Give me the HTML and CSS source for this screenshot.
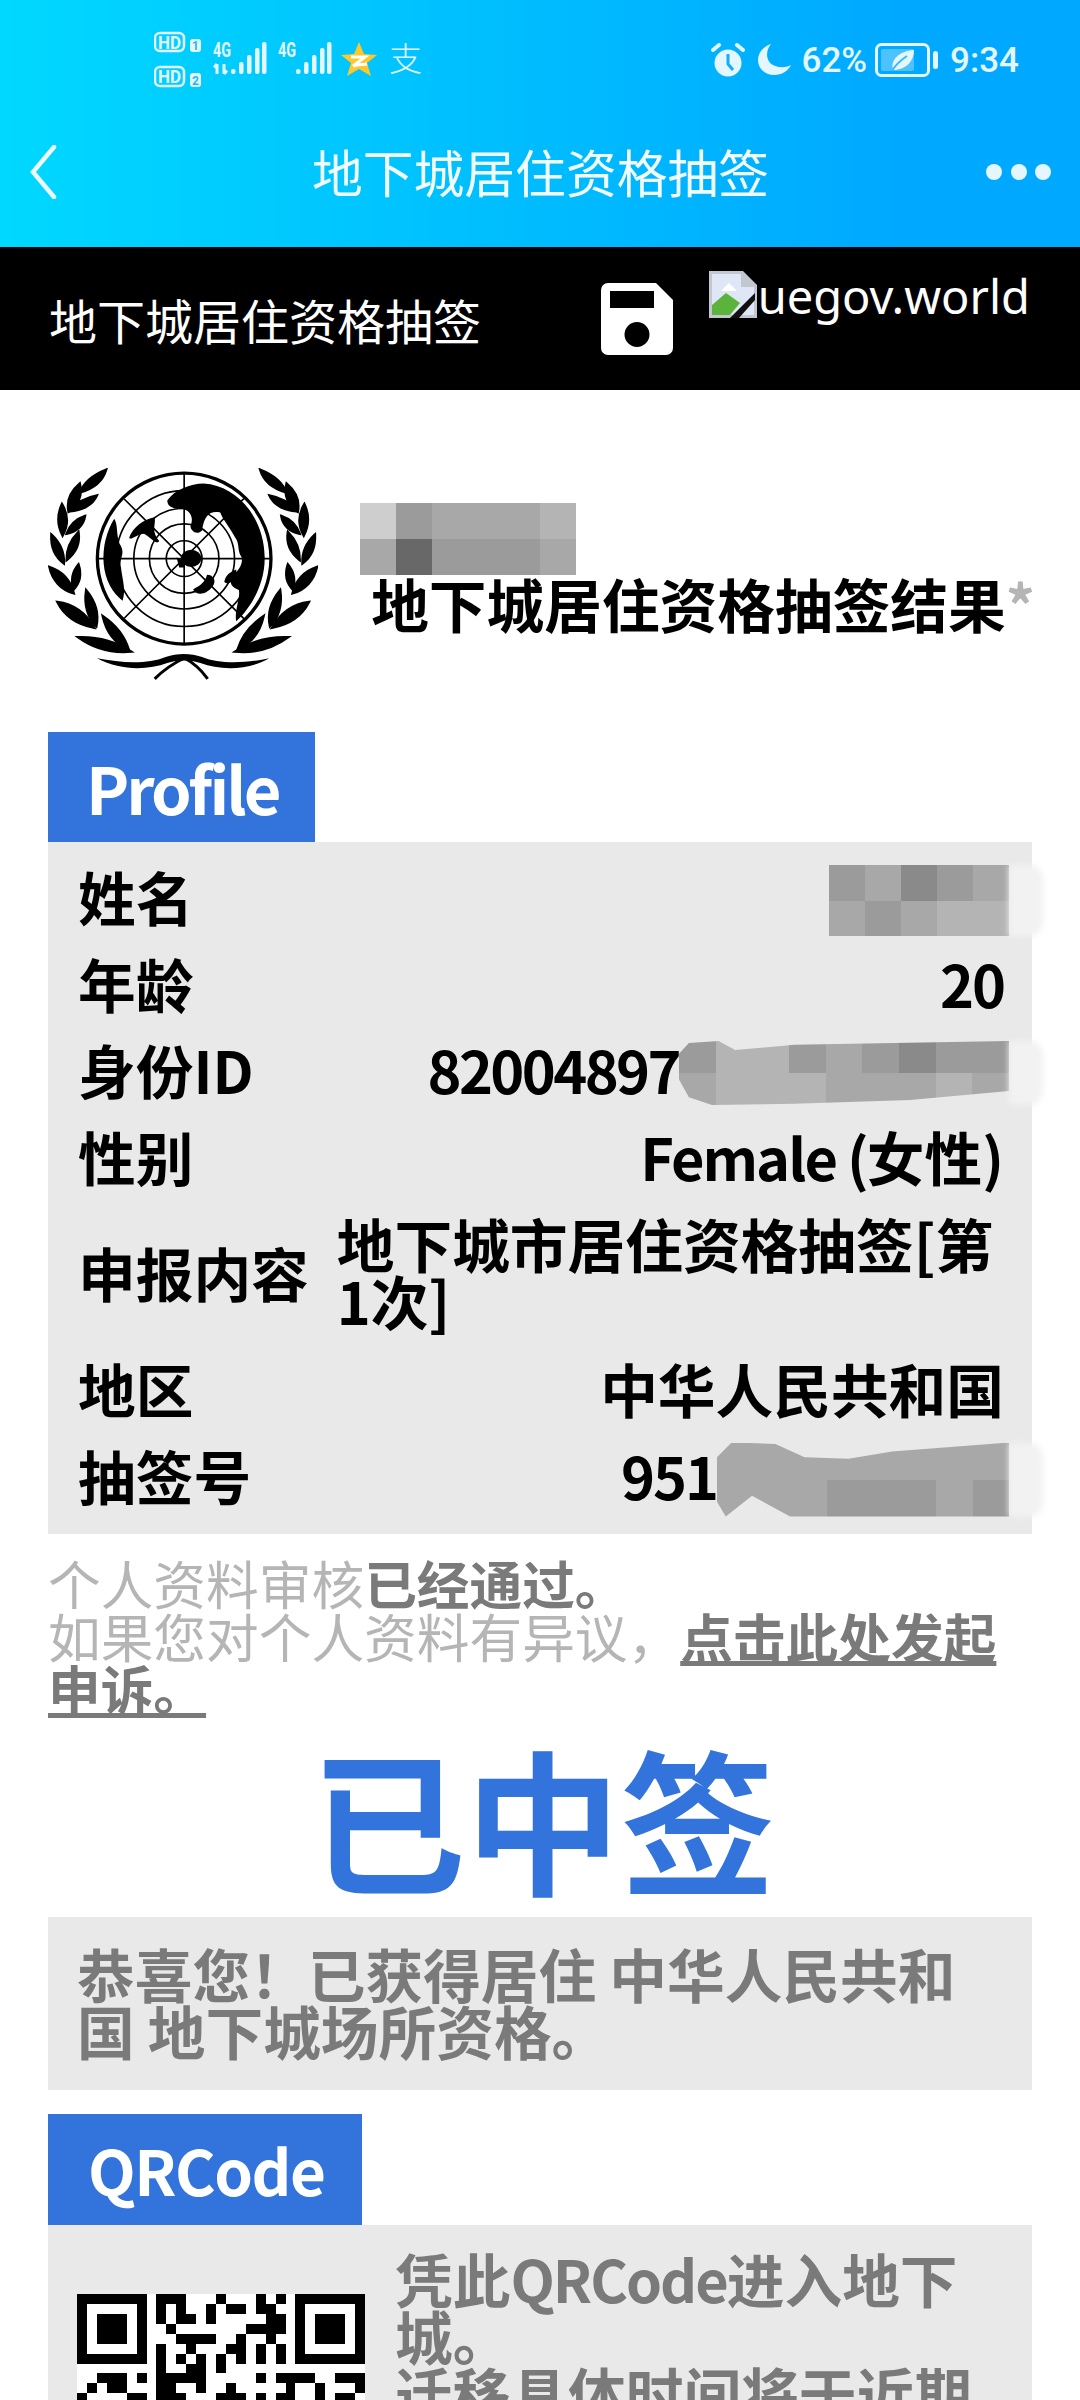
FILE: index.html
```html
<!DOCTYPE html>
<html lang="zh-CN">
<head>
    <meta charset="UTF-8">
    <meta name="viewport" content="width=device-width, initial-scale=1.0">
    <title>地下城居住资格抽签</title>
    <link rel="stylesheet" href="styles.css">
</head>
<body>
    <div class="page">
        <header class="app-header">
            <div class="statusbar">
                <svg class="status-left" viewBox="0 0 270 60" width="270" height="60">
                    <g class="hd-badge">
                        <rect x="1" y="3" width="29" height="18" rx="5"/>
                        <text x="15.500" y="18.500" text-anchor="middle" textLength="23" lengthAdjust="spacingAndGlyphs">HD</text>
                        <rect class="sim" x="36" y="9" width="11" height="13" rx="3"/>
                        <text class="sim-num" x="41.500" y="20" text-anchor="middle">1</text>
                        <rect x="1" y="37" width="29" height="19" rx="5"/>
                        <text x="15.500" y="53" text-anchor="middle" textLength="23" lengthAdjust="spacingAndGlyphs">HD</text>
                        <rect class="sim" x="36" y="43" width="11" height="14" rx="3"/>
                        <text class="sim-num" x="41.500" y="54.500" text-anchor="middle">2</text>
                    </g>
                    <g class="signal">
                        <text x="59" y="27" textLength="18" lengthAdjust="spacingAndGlyphs">4G</text>
                        <path class="arrows" d="M63 44v-10m-3 3.500l3-3.500M70 34v10m3-3.500l-3 3.500"/>
                        <rect x="77" y="39" width="4.500" height="5" rx="2"/>
                        <rect x="85" y="32" width="4.500" height="12" rx="2"/>
                        <rect x="93" y="25" width="4.500" height="19" rx="2"/>
                        <rect x="101" y="18" width="4.500" height="26" rx="2"/>
                        <rect x="108" y="12" width="4.500" height="32" rx="2"/>
                        <text x="124" y="27" textLength="18" lengthAdjust="spacingAndGlyphs">4G</text>
                        <rect x="142" y="39" width="4.500" height="5" rx="2"/>
                        <rect x="150" y="32" width="4.500" height="12" rx="2"/>
                        <rect x="158" y="25" width="4.500" height="19" rx="2"/>
                        <rect x="166" y="18" width="4.500" height="26" rx="2"/>
                        <rect x="173" y="12" width="4.500" height="32" rx="2"/>
                    </g>
                    <polygon class="star" points="205,12 210,24 223,25 213,33 217,46 205,39 193,46 197,33 187,25 200,24"/>
                    <path class="star-z" d="M197 27h14l-12 9c5-2 10-1 14-2"/>
                    <text class="zhi" x="235" y="41">支</text>
                </svg>
                <div class="status-right">
                    <svg viewBox="0 0 34 34" width="34" height="34">
                        <circle class="ico-fill" cx="17" cy="20" r="13.500"/>
                        <path class="ico-hand" d="M17 11v10l5 6"/>
                        <path class="ico-bell" d="M2 7l6-5M32 7l-6-5"/>
                    </svg>
                    <svg class="ico-moon" viewBox="0 0 33 32" width="33" height="32">
                        <path class="ico-fill" d="M13 0C4 3 0 10 0 16c0 9 8 15 16 15 8 0 14-4 17-10-6 3-12 3-18 0C8 18 7 7 13 0z"/>
                    </svg>
                    <span class="status-pct">62%</span>
                    <svg class="battery" viewBox="0 0 64 34" width="64" height="34">
                        <rect class="batt-shell" x="1.500" y="1.500" width="52" height="31" rx="5"/>
                        <rect class="batt-level" x="6" y="6" width="33" height="22" rx="2"/>
                        <path class="ico-fill" d="M18 27c-3-10 6-19 21-20 0 11-8 20-21 20z"/>
                        <path class="batt-vein" d="M17 28c4-7 9-11 15-15"/>
                        <rect class="ico-fill" x="58" y="8" width="5" height="18" rx="2.500"/>
                    </svg>
                    <span class="status-time">9:34</span>
                </div>
            </div>
            <nav class="navbar">
                <svg class="nav-back" viewBox="0 0 28 54" width="28" height="54">
                    <path d="M25 2L4 27l21 25"/>
                </svg>
                <span class="nav-title">地下城居住资格抽签</span>
                <svg class="nav-more" viewBox="0 0 66 18" width="66" height="18">
                    <circle cx="8" cy="9" r="8"/>
                    <circle cx="33" cy="9" r="8"/>
                    <circle cx="57" cy="9" r="8"/>
                </svg>
            </nav>
        </header>

        <div class="topbar">
            <span class="topbar-title">地下城居住资格抽签</span>
            <svg class="save-icon" viewBox="0 0 72 72" width="72" height="72">
                <path fill-rule="evenodd" d="M7 0h48l17 17v48a7 7 0 0 1-7 7H7a7 7 0 0 1-7-7V7a7 7 0 0 1 7-7zM9 8v17h44V8zM36 39a12.500 12.500 0 1 0 0 25 12.500 12.500 0 0 0 0-25z"/>
            </svg>
            <div class="site-logo">
                <svg class="broken-img" viewBox="0 0 48 47" width="48" height="47">
                    <path fill="#c3c7cf" d="M0 0h34l14 14v33H0z"/>
                    <path fill="#dfe6f5" d="M3 3h29v13h13v28H3z"/>
                    <path fill="#fff" d="M12 20l8-8 8 8z"/>
                    <path fill="#5cb33c" d="M3 44V34l14-12 14 10-10 12z"/>
                    <path fill="#111" d="M21 47L46 22v7L30 47z"/>
                </svg>
                <span class="site-name">uegov.world</span>
            </div>
        </div>

        <main class="content">
            <section class="brand">
                <svg class="un-logo" viewBox="50 52 815 642" width="270" height="213">
                    <defs>
                        <g id="wreath">
                            <path d="M146 126C160 90 190 70 226 56 215 95 185 115 146 126z"/>
                            <path d="M112 184C105 150 120 120 146 98 155 135 140 165 112 184z"/>
                            <path d="M116 182C135 155 165 140 198 134 185 165 150 180 116 182z"/>
                            <path d="M94 256C78 225 78 190 92 160 110 190 112 225 94 256z"/>
                            <path d="M106 250C115 225 135 205 162 196 158 225 135 245 106 250z"/>
                            <path d="M98 340C70 320 58 290 60 252 85 275 100 305 98 340z"/>
                            <path d="M106 330C105 295 118 268 142 244 148 280 132 310 106 330z"/>
                            <path d="M128 430C90 420 62 390 54 350 90 362 118 390 128 430z"/>
                            <path d="M126 420C118 395 122 365 142 342 152 372 146 400 126 420z"/>
                            <path d="M190 534C140 525 100 500 78 456 125 462 165 490 190 534z"/>
                            <path d="M196 530C170 505 158 465 165 420 190 450 205 490 196 530z"/>
                            <path d="M302 606C240 612 185 595 140 562 195 560 255 575 302 606z"/>
                            <path d="M294 600C250 580 225 545 215 498 255 525 282 560 294 600z"/>
                        </g>
                    </defs>
                    <use class="un-wreath" href="#wreath"/>
                    <use class="un-wreath" href="#wreath" transform="translate(916 0) scale(-1 1)"/>
                    <path d="M198 626C270 640 350 645 405 622 440 610 480 610 515 622 570 645 650 640 718 626 650 664 570 662 510 640 480 630 440 630 410 640 350 662 270 664 198 626z"/>
                    <path class="un-line-thick" d="M372 688C400 660 430 640 462 625 490 640 512 660 532 688"/>
                    <g class="un-grid">
                        <ellipse class="un-rim" cx="461" cy="325" rx="262" ry="258"/>
                        <circle cx="461" cy="325" r="54"/>
                        <circle cx="461" cy="325" r="105"/>
                        <circle cx="461" cy="325" r="152"/>
                        <circle cx="461" cy="325" r="205"/>
                        <path d="M461 66v518M200 325h522M280 145l362 362M280 505l362-362"/>
                    </g>
                    <path d="M410 150C430 118 480 98 520 98 620 104 702 200 704 320 706 400 662 475 618 514 612 482 632 440 626 420 606 412 590 400 614 370 625 360 640 340 634 320 620 300 630 280 614 260 600 232 580 212 570 186 540 180 522 192 515 240 500 256 480 242 480 226 490 206 482 182 460 176 430 176 410 170 410 150z"/>
                    <path d="M250 205C228 240 214 290 218 340 222 390 245 430 275 452 286 420 275 390 270 350 265 320 286 310 266 280 255 250 262 225 250 205z"/>
                    <path d="M295 262C305 230 340 206 372 200 376 226 360 240 386 272 376 286 360 260 340 250 320 250 300 272 295 262z"/>
                    <ellipse cx="482" cy="324" rx="31" ry="26"/>
                    <path d="M438 322L458 330 462 352 446 352z"/>
                    <path d="M488 418C510 406 525 396 530 374 550 374 560 394 546 410 530 432 500 440 488 418z"/>
                    <path d="M582 396C585 375 600 365 618 358 622 380 600 410 582 396z"/>
                </svg>
                <div class="brand-text">
                    <div class="mosaic mosaic-brand">
                        <div class="mosaic-cells cols-6">
                            <span class="t5"></span><span class="t3"></span><span class="t2"></span><span class="t2"></span><span class="t2"></span><span class="t1"></span>
                            <span class="t2"></span><span class="t6"></span><span class="t3"></span><span class="t3"></span><span class="t3"></span><span class="t2"></span>
                        </div>
                    </div>
                    <h1 class="brand-title">地下城居住资格抽签结果<span class="brand-star">*</span></h1>
                </div>
            </section>

            <div class="tab tab-profile">Profile</div>
            <section class="profile">
                <div class="row">
                    <span class="row-label">姓名</span>
                    <div class="row-value">
                        <div class="mosaic mosaic-name">
                            <div class="mosaic-cells cols-5">
                                <span class="t3"></span><span class="t2"></span><span class="t4"></span><span class="t3"></span><span class="t2"></span>
                                <span class="t2"></span><span class="t3"></span><span class="t2"></span><span class="t1"></span><span class="t1"></span>
                            </div>
                        </div>
                    </div>
                </div>
                <div class="row">
                    <span class="row-label">年龄</span>
                    <div class="row-value"><span class="latin">20</span></div>
                </div>
                <div class="row">
                    <span class="row-label">身份ID</span>
                    <div class="row-value">
                        <span class="latin id-num">82004897</span>
                        <div class="mosaic mosaic-id">
                            <div class="mosaic-cells cols-9">
                                <span class="t3"></span><span class="t1"></span><span class="t1"></span><span class="t3"></span><span class="t2"></span><span class="t3"></span><span class="t4"></span><span class="t3"></span><span class="t3"></span>
                                <span class="t2"></span><span class="t1"></span><span class="t1"></span><span class="t1"></span><span class="t2"></span><span class="t2"></span><span class="t2"></span><span class="t1"></span><span class="t2"></span>
                            </div>
                        </div>
                    </div>
                </div>
                <div class="row">
                    <span class="row-label">性别</span>
                    <div class="row-value"><span><span class="latin">Female (</span>女性)</span></div>
                </div>
                <div class="row row-wrap">
                    <span class="row-label">申报内容</span>
                    <div class="row-text">地下城市居住资格抽签[第1次]</div>
                </div>
                <div class="row">
                    <span class="row-label">地区</span>
                    <div class="row-value">中华人民共和国</div>
                </div>
                <div class="row">
                    <span class="row-label">抽签号</span>
                    <div class="row-value">
                        <span class="latin">951</span>
                        <div class="mosaic mosaic-serial">
                            <div class="mosaic-cells cols-8">
                                <span class="t2"></span><span class="t2"></span><span class="t2"></span><span class="t2"></span><span class="t2"></span><span class="t2"></span><span class="t2"></span><span class="t2"></span>
                                <span class="t2"></span><span class="t2"></span><span class="t2"></span><span class="t3"></span><span class="t3"></span><span class="t3"></span><span class="t2"></span><span class="t3"></span>
                            </div>
                        </div>
                    </div>
                </div>
            </section>

            <p class="notice">个人资料审核<strong>已经通过。</strong><br>如果您对个人资料有异议，<a class="notice-link" href="#">点击此处发起申诉。</a></p>

            <div class="result">已中签</div>

            <p class="congrats">恭喜您！已获得居住 中华人民共和国 地下城场所资格。</p>

            <div class="tab tab-qr">QRCode</div>
            <section class="qr-box">
                <svg class="qr" viewBox="0 0 29 29" width="288" height="288" shape-rendering="crispEdges">
                    <rect width="29" height="29" fill="#fff"/>
                    <path fill-rule="evenodd" d="M0 0h7v7h-7zM1 1h5v5h-5zM2 2h3v3h-3zM22 0h7v7h-7zM23 1h5v5h-5zM24 2h3v3h-3z"/>
                    <path d="M8 0h3v1h-3zM14 0h1v1h-1zM18 0h1v1h-1zM20 0h1v1h-1z
                             M8 1h1v1h-1zM10 1h1v1h-1zM13 1h1v1h-1zM15 1h2v1h-2zM18 1h2v1h-2z
                             M8 2h1v1h-1zM10 2h2v1h-2zM13 2h1v1h-1zM19 2h2v1h-2z
                             M9 3h1v1h-1zM17 3h4v1h-4z
                             M10 4h4v1h-4zM16 4h1v1h-1zM19 4h1v1h-1z
                             M8 5h1v1h-1zM11 5h1v1h-1zM15 5h2v1h-2zM18 5h1v1h-1zM20 5h1v1h-1z
                             M8 6h1v1h-1zM10 6h1v1h-1zM12 6h1v1h-1zM14 6h1v1h-1zM16 6h1v1h-1zM18 6h1v1h-1zM20 6h1v1h-1z
                             M8 7h1v1h-1zM11 7h2v1h-2zM14 7h1v1h-1z
                             M2 8h3v1h-3zM6 8h1v1h-1zM8 8h5v1h-5zM18 8h1v1h-1zM20 8h4v1h-4zM26 8h3v1h-3z
                             M1 9h1v1h-1zM3 9h2v1h-2zM8 9h2v1h-2zM12 9h1v1h-1zM15 9h1v1h-1zM21 9h1v1h-1zM24 9h1v1h-1zM28 9h1v1h-1z
                             M0 10h1v1h-1zM5 10h2v1h-2zM8 10h3v1h-3zM14 10h3v1h-3zM18 10h1v1h-1zM20 10h2v1h-2zM24 10h1v1h-1zM26 10h2v1h-2z"/>
                </svg>
                <p class="qr-text">凭此<span class="latin">QRCode</span>进入地下城。<br>迁移具体时间将于近期</p>
            </section>
        </main>
    </div>
</body>
</html>
```

FILE: styles.css
```css
* {
    box-sizing: border-box;
}

body {
    margin: 0;
    background: #fff;
    font-family: "Noto Sans CJK SC", "Noto Sans", sans-serif;
}

.page {
    width: 1080px;
    height: 2400px;
    overflow: hidden;
    background: #fff;
}

/* app chrome */
.app-header {
    height: 247px;
    background: linear-gradient(90deg, #00d8ff 0%, #00a8ff 85%);
    color: #fff;
}

.statusbar {
    height: 116px;
    padding: 30px 61px 0 154px;
    display: flex;
    justify-content: space-between;
}

.status-left text {
    font-family: "Roboto", sans-serif;
    font-weight: 700;
}

.hd-badge rect {
    fill: none;
    stroke: #e4f7ff;
    stroke-width: 2.5;
}

.hd-badge text {
    fill: #e4f7ff;
    font-size: 19px;
}

.hd-badge .sim {
    fill: #e4f7ff;
    stroke: none;
}

.hd-badge .sim-num {
    fill: #1cb8ff;
    font-size: 12px;
}

.signal rect {
    fill: #e4f7ff;
}

.signal text {
    fill: #e4f7ff;
    font-size: 20px;
}

.arrows {
    fill: none;
    stroke: #e4f7ff;
    stroke-width: 3;
}

.star {
    fill: #ffc72a;
}

.star-z {
    fill: none;
    stroke: #fff;
    stroke-width: 3;
}

.status-left .zhi {
    fill: #e4f7ff;
    font-family: "Noto Sans CJK SC", sans-serif;
    font-size: 33px;
    font-weight: 300;
}

.status-right {
    height: 60px;
    display: flex;
    align-items: center;
    color: #e4f7ff;
    font-family: "Roboto", sans-serif;
    font-size: 35px;
    font-weight: 500;
}

.status-right svg {
    margin-right: 13px;
}

.status-right .ico-moon {
    margin-right: 11px;
}

.status-pct {
    margin-right: 8px;
}

.status-right .battery {
    margin-right: 11px;
}

.ico-fill {
    fill: #e4f7ff;
}

.ico-hand {
    fill: none;
    stroke: #10aeff;
    stroke-width: 3;
}

.ico-bell {
    fill: none;
    stroke: #e4f7ff;
    stroke-width: 4;
    stroke-linecap: round;
}

.batt-shell {
    fill: none;
    stroke: #e4f7ff;
    stroke-width: 3;
}

.batt-level {
    fill: #4cc2ff;
}

.batt-vein {
    fill: none;
    stroke: #3cb8ff;
    stroke-width: 2;
}

.navbar {
    height: 131px;
    padding: 0 28px 20px 29px;
    display: grid;
    grid-template-columns: 1fr auto 1fr;
    align-items: center;
}

.nav-back path {
    fill: none;
    stroke: #ecfaff;
    stroke-width: 4.500;
    stroke-linecap: round;
}

.nav-title {
    font-size: 50.800px;
    line-height: 1;
    color: #f2fbff;
}

.nav-more {
    justify-self: end;
}

.nav-more circle {
    fill: #e4f7ff;
}

.topbar {
    height: 143px;
    padding: 0 50px 0 49px;
    display: flex;
    align-items: center;
    background: #000;
    color: #fff;
}

.topbar-title {
    font-size: 48px;
    line-height: 1;
    margin-right: auto;
}

.save-icon {
    fill: #fff;
    margin-right: 36px;
}

.site-logo {
    align-self: flex-start;
    margin-top: 24px;
    display: flex;
    align-items: flex-start;
}

.site-name {
    font-family: "Noto Sans", sans-serif;
    font-size: 47px;
    line-height: 47px;
    padding-top: 2px;
    margin-left: 1px;
}

/* page */
.content {
    padding: 78px 48px 0;
}

.brand {
    display: flex;
    margin-bottom: 51px;
}

.un-logo {
    flex: none;
}

.un-wreath {
    stroke: #000;
    stroke-width: 7;
}

.un-grid {
    fill: none;
    stroke: #000;
    stroke-width: 5;
}

.un-grid .un-rim {
    stroke-width: 10;
}

.un-line-thick {
    fill: none;
    stroke: #000;
    stroke-width: 9;
}

.brand-text {
    flex: 1;
    height: 213px;
    padding-top: 35px;
}

.brand-title {
    margin: 0 -3px 0 0;
    font-size: 57.700px;
    line-height: 57px;
    font-weight: 700;
    color: #000;
    text-align: right;
    white-space: nowrap;
}

.brand-star {
    color: #b5b5b5;
}

.mosaic {
    position: relative;
    flex: none;
}

.mosaic-cells {
    display: grid;
    grid-auto-rows: 1fr;
    height: 100%;
}

.cols-5 { grid-template-columns: repeat(5, 1fr); }
.cols-6 { grid-template-columns: repeat(6, 1fr); }
.cols-8 { grid-template-columns: repeat(8, 1fr); }
.cols-9 { grid-template-columns: repeat(9, 1fr); }

.t1 { background: #b4b4b4; }
.t2 { background: #a8a8a8; }
.t3 { background: #9b9b9b; }
.t4 { background: #8a8a8a; }
.t5 { background: #cecece; }
.t6 { background: #686868; }

.mosaic-brand {
    width: 216px;
    height: 72px;
    margin-left: 42px;
}

.mosaic-name,
.mosaic-id,
.mosaic-serial {
    margin-right: -5px;
}

/* smear left over from the redaction, fades into the panel */
.mosaic-name::after,
.mosaic-id::after,
.mosaic-serial::after {
    content: "";
    position: absolute;
    top: 0;
    bottom: 0;
    left: 100%;
    width: 34px;
    background: #f2f2f2;
    border-radius: 0 14px 14px 0;
    filter: blur(3px);
}

.mosaic-name {
    width: 180px;
    height: 71px;
    margin-top: -3px;
    margin-bottom: -11px;
}

.mosaic-id {
    width: 330px;
    height: 64px;
    margin-top: 0;
    margin-bottom: -7px;
}

.mosaic-id .mosaic-cells {
    clip-path: polygon(0 20%, 3% 3%, 12% 0, 17% 14%, 35% 6%, 100% 0, 100% 78%, 70% 92%, 35% 98%, 10% 100%, 3% 88%, 0 60%);
}

.mosaic-serial {
    width: 292px;
    height: 74px;
    margin-top: -4px;
    margin-bottom: -12px;
}

.mosaic-serial .mosaic-cells {
    clip-path: polygon(0 20%, 5% 0, 20% 2%, 30% 20%, 45% 22%, 60% 12%, 100% 0, 100% 100%, 42% 100%, 25% 100%, 12% 72%, 3% 100%, 0 80%);
}

.tab {
    height: 110px;
    display: flex;
    align-items: center;
    background: #3273dc;
    color: #fff;
    font-size: 65px;
    font-weight: 700;
}

.tab-profile {
    width: 267px;
    padding-left: 38px;
    letter-spacing: -3px;
}

.tab-qr {
    width: 314px;
    height: 111px;
    padding-left: 40px;
    margin-top: 24px;
    font-size: 62px;
    letter-spacing: -1.500px;
}

.profile {
    padding: 11px 28px 15px 30px;
    background: #e9e9e9;
    font-size: 57.700px;
    font-weight: 700;
    color: #000;
}

.row {
    display: flex;
    align-items: center;
    padding: 15px 0 14.500px;
    line-height: 57px;
}

.row-label {
    flex: none;
}

.row-value {
    flex: 1;
    display: flex;
    justify-content: flex-end;
}

.latin {
    letter-spacing: -2px;
}

.id-num {
    letter-spacing: -2.600px;
}

.row-wrap {
    padding: 16px 0;
}

.row-text {
    flex: 1;
    margin-left: 28px;
}

.notice {
    margin: 22px 0 0;
    font-size: 52.700px;
    line-height: 52.500px;
    color: #b5b5b5;
}

.notice strong {
    color: #7a7a7a;
    font-weight: 700;
}

.notice-link {
    color: #7a7a7a;
    font-weight: 700;
    text-decoration: underline;
}

.result {
    margin-top: 0;
    padding-left: 6px;
    font-size: 155px;
    line-height: 203px;
    font-weight: 700;
    color: #3273dc;
    text-align: center;
}

.congrats {
    margin: 0;
    padding: 28px 29px 31px;
    background: #e9e9e9;
    font-size: 57.700px;
    line-height: 57px;
    font-weight: 700;
    color: #7a7a7a;
}

.qr-box {
    display: flex;
    padding: 25px 29px 0;
    background: #e9e9e9;
    height: 300px;
}

.qr {
    flex: none;
    margin-top: 44px;
    margin-right: 30px;
}

.qr-text {
    margin: 0;
    font-size: 57.700px;
    line-height: 57px;
    font-weight: 700;
    color: #7a7a7a;
}
```
